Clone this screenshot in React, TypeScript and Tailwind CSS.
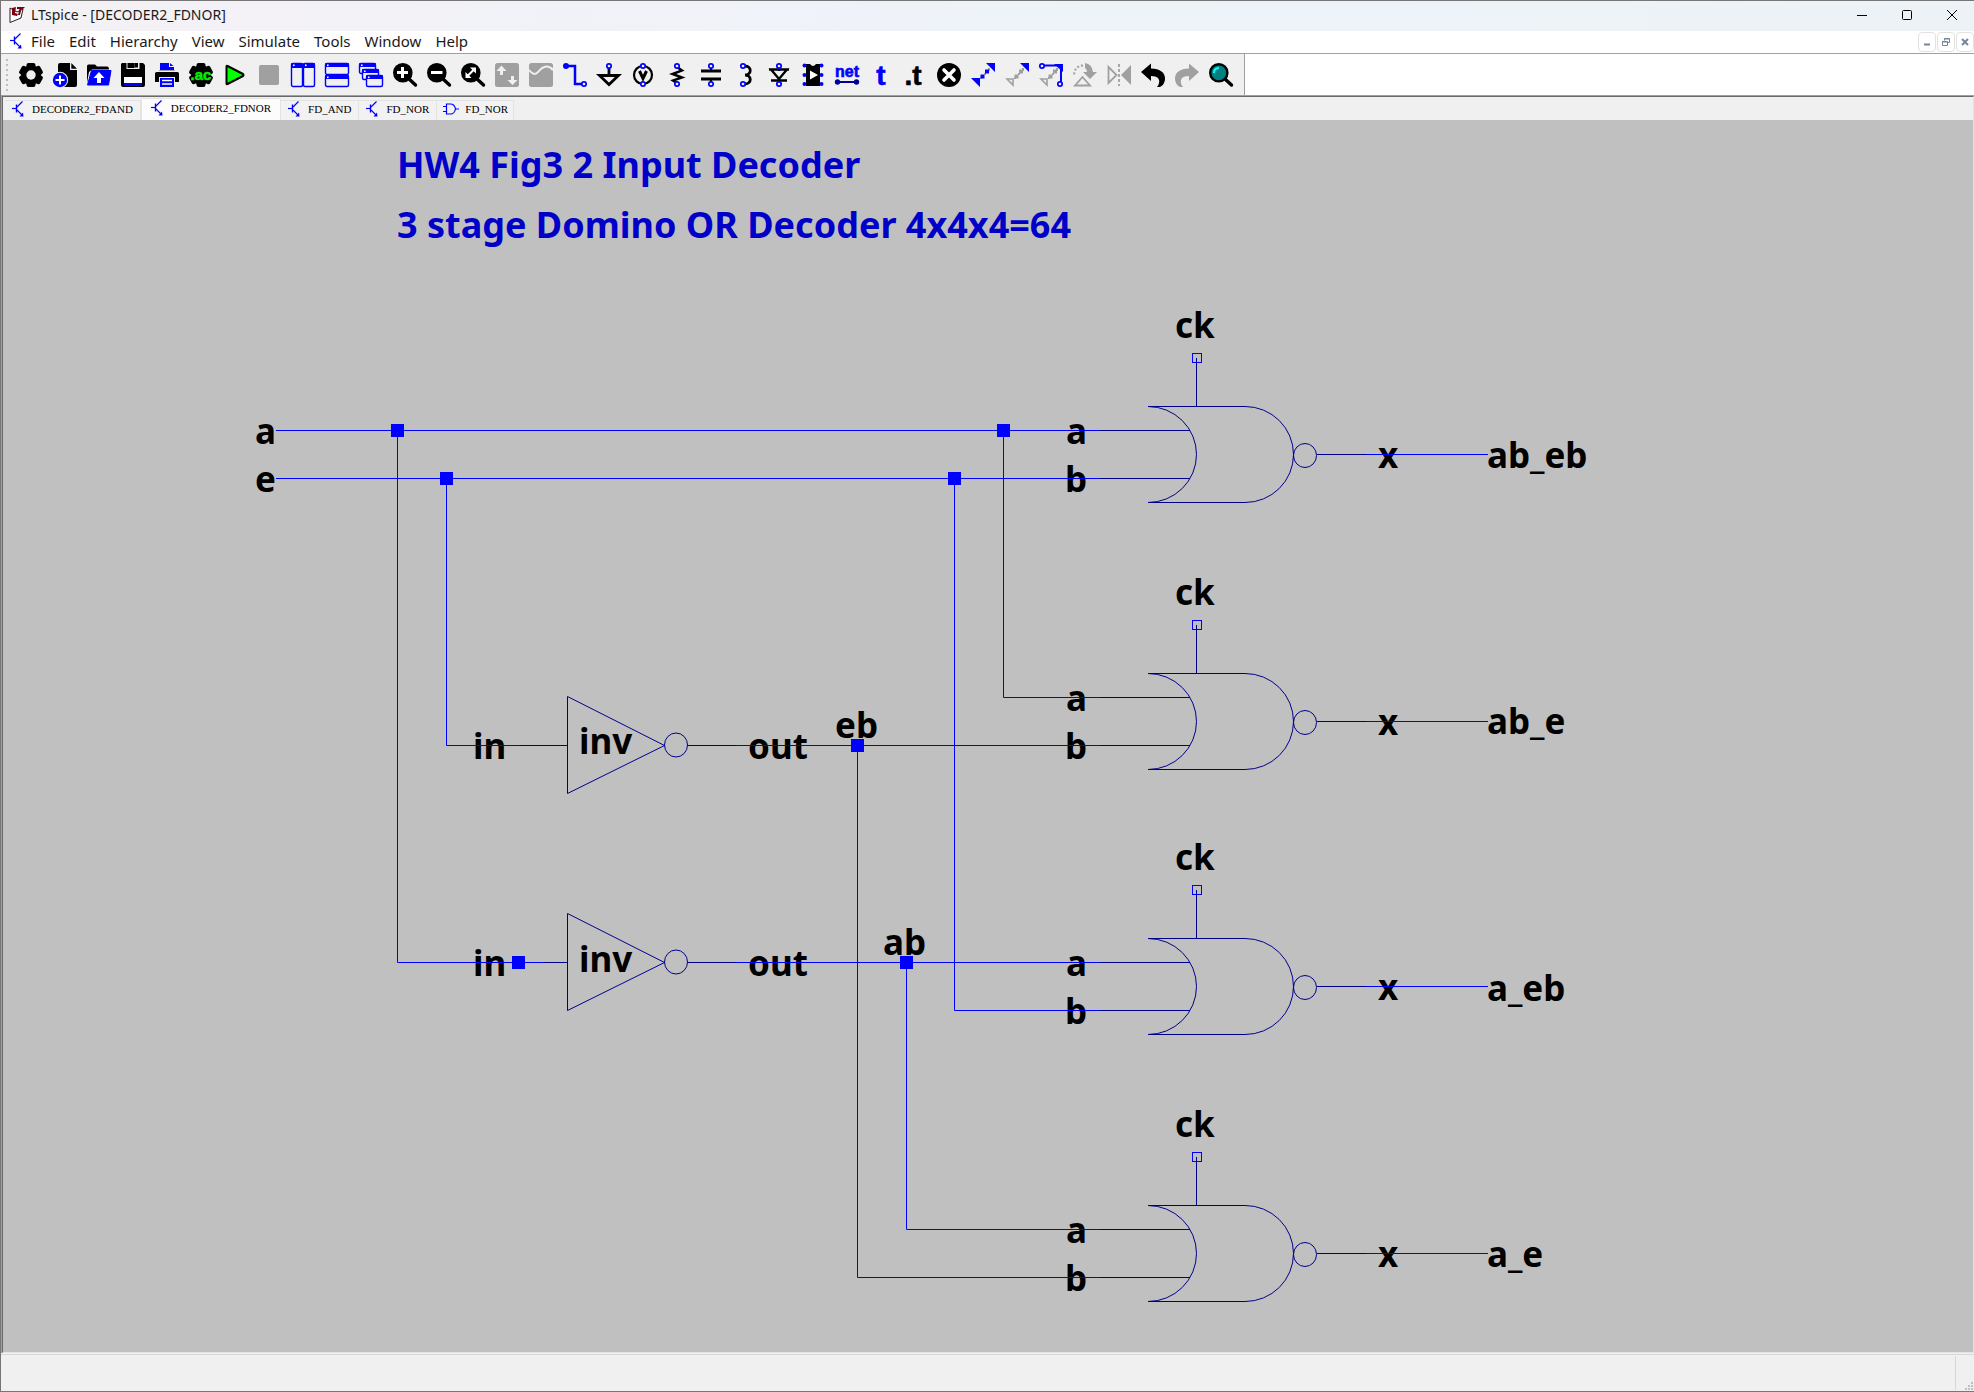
import type { ReactNode } from "react";

const BLUE = "#0000ff";
const NAVY = "#00008b";
const GREY = "#a0a0a0";
const FACE = "#f0f0f0";

/* ---------- toolbar icons, all on a 24 unit grid ---------- */

function GearBody() {
  return (
    <>
      <circle cx="12" cy="12" r="10" />
      <rect x="7.5" y="0" width="9" height="24" rx="2" />
      <rect x="7.5" y="0" width="9" height="24" rx="2" transform="rotate(60 12 12)" />
      <rect x="7.5" y="0" width="9" height="24" rx="2" transform="rotate(120 12 12)" />
    </>
  );
}

function Pin({ x, y }: { x: number; y: number }) {
  return <circle cx={x} cy={y} r="2.2" fill={FACE} stroke={BLUE} strokeWidth="1.7" />;
}

function Lens({ children }: { children: ReactNode }) {
  return (
    <>
      <path d="M15 15l7.5 7" stroke="#000" strokeWidth="3.4" strokeLinecap="round" />
      <circle cx="9.8" cy="9.8" r="9.8" />
      {children}
    </>
  );
}

function Pane({ x, y, w, h, bar }: { x: number; y: number; w: number; h: number; bar: number }) {
  return (
    <>
      <rect x={x + 0.5} y={y + 0.5} width={w - 1} height={h - 1} rx="1.5" fill={FACE} stroke={BLUE} strokeWidth="1.4" />
      <rect x={x} y={y} width={w} height={bar} rx="1" fill={BLUE} />
      <rect x={x + 2} y={y + 1.5} width="1.6" height="1.6" fill="#fff" />
    </>
  );
}

function DragDots({ first, second }: { first: string; second: string }) {
  return (
    <>
      <path d="M9 14h2v2H9zM13 10h2v2h-2zM17 5h2v3h-2z" fill={GREY} />
      <path d="M9.5 11.5h4v4h-4z" fill={first} />
      <path d="M14 6.5h4v4h-4z" fill={second} />
    </>
  );
}

const tools: { name: string; art: ReactNode }[] = [
  { name: "Settings", art: <><GearBody /><circle cx="12" cy="12" r="4.7" fill={FACE} /></> },
  {
    name: "New schematic",
    art: (
      <>
        <path d="M5 2q0-2 2-2h10v7h7v15q0 2-2 2H5z" />
        <path d="M18.3 0L24 5.7h-5.7z" />
        <circle cx="7" cy="17" r="8.2" fill={FACE} />
        <circle cx="7" cy="17" r="7.2" fill={BLUE} />
        <path d="M7 12.5v9M2.5 17h9" stroke="#fff" strokeWidth="2" />
      </>
    ),
  },
  {
    name: "Open",
    art: (
      <>
        <path d="M0 20V3q0-1.500 1.500-1.500H8l2 2h10q2 0 2 3H5L2 9z" />
        <path d="M4.500 7.500H24L21.500 22H0.500z" fill={BLUE} stroke={BLUE} strokeLinejoin="round" />
        <path d="M12 9l5.500 6h-3.500v5h-4v-5H6.500z" fill="#fff" />
      </>
    ),
  },
  {
    name: "Save",
    art: (
      <>
        <path d="M1 0h21l2 2v20q0 2-2 2H2q-2 0-2-2V1z" />
        <path d="M5.500 0v6h13V0h-1.500v4.500H13.500V0z" fill={FACE} />
        <path d="M6.500 0v5h7V0z" />
        <path d="M3 14h18v6H3z" fill="#fff" />
        <path d="M3 20h18v3H3z" fill={BLUE} />
      </>
    ),
  },
  {
    name: "Print",
    art: (
      <>
        <path d="M5 0h9v4h5v3H5z" fill={BLUE} />
        <path d="M15 0l3.500 3H15z" fill={BLUE} />
        <path d="M4 7h16v1H4z" fill={GREY} />
        <path d="M1.500 9h21Q24 9 24 10.500V19h-4v-5H4v5H0v-8.500Q0 9 1.500 9z" />
        <path d="M5 15h14v9H5z" fill={BLUE} />
        <path d="M7 17.500h10M7 21h10" stroke="#fff" strokeWidth="1.500" />
      </>
    ),
  },
  {
    name: "Configure analysis",
    art: (
      <>
        <GearBody />
        <text x="12" y="17" textAnchor="middle" fill="#00f000" className="font-['Liberation_Sans'] text-[15px] font-bold" stroke="#00f000" strokeWidth="0.5">.ac</text>
      </>
    ),
  },
  { name: "Run", art: <path d="M3.500 3.500v17q0 1 1 .5l15.500-8q1-1 0-2L4.500 3q-1-.5-1 .5z" fill="#00ff00" stroke="#000" strokeWidth="2" strokeLinejoin="round" /> },
  { name: "Stop", art: <rect x="2" y="2" width="20" height="20" rx="2" fill={GREY} /> },
  { name: "Tile vertically", art: <><Pane x={0} y={0} w={12} h={24} bar={5} /><Pane x={12} y={0} w={12} h={24} bar={5} /></> },
  { name: "Tile horizontally", art: <><Pane x={0} y={0} w={24} h={12} bar={4} /><Pane x={0} y={12} w={24} h={12} bar={4} /></> },
  { name: "Cascade", art: <><Pane x={0} y={0} w={17} h={11} bar={4} /><Pane x={3} y={6} w={17} h={11} bar={4} /><Pane x={7} y={12} w={17} h={12} bar={4} /></> },
  { name: "Zoom in", art: <Lens><path d="M9.500 4v11M4 9.500h11" stroke="#fff" strokeWidth="3" /></Lens> },
  { name: "Zoom out", art: <Lens><path d="M4 9.500h11.500" stroke="#fff" strokeWidth="3" /></Lens> },
  {
    name: "Zoom to fit",
    art: (
      <Lens>
        <path d="M6.500 13L13 6.500" stroke="#fff" strokeWidth="2.200" />
        <path d="M9 4.500h6v6zM4.500 9v6h6z" fill="#fff" />
      </Lens>
    ),
  },
  {
    name: "Autorange",
    art: (
      <>
        <rect width="24" height="24" rx="2.500" fill={GREY} />
        <path d="M6.500 12V6M17.500 13v6" stroke={FACE} strokeWidth="3" />
        <path d="M1.500 8l5-5.500 5 5.500zM12.500 17l5 5 5-5z" fill={FACE} />
      </>
    ),
  },
  {
    name: "Waveform",
    art: (
      <>
        <rect width="24" height="24" rx="2.500" fill={GREY} />
        <path d="M0 7c4 5 7 5 10 1s9-7 14-1" fill="none" stroke={FACE} strokeWidth="2" />
      </>
    ),
  },
  {
    name: "Wire",
    art: (
      <>
        <path d="M3 3h9v18h7" fill="none" stroke={BLUE} strokeWidth="2.500" />
        <circle cx="3" cy="3" r="3" fill={BLUE} />
        <Pin x={21} y={21} />
      </>
    ),
  },
  {
    name: "Ground",
    art: (
      <>
        <path d="M12 4v8M2.500 12.500h19L12 21.500z" fill="none" stroke="#000" strokeWidth="2.800" />
        <Pin x={12} y={3} />
      </>
    ),
  },
  {
    name: "Voltage source",
    art: (
      <>
        <circle cx="12" cy="12" r="9" fill="none" stroke="#000" strokeWidth="2.200" />
        <path d="M8.500 8l3.500 7.500L15.500 8" fill="none" stroke="#000" strokeWidth="3" />
        <Pin x={12} y={3} /><Pin x={12} y={21} />
      </>
    ),
  },
  {
    name: "Resistor",
    art: (
      <>
        <path d="M12 4l5 3.500L7.500 11l9.500 3.500L8 17.500l4 2.500" fill="none" stroke="#000" strokeWidth="2.400" />
        <Pin x={12} y={3} /><Pin x={12} y={21} />
      </>
    ),
  },
  {
    name: "Capacitor",
    art: (
      <>
        <path d="M12 4v4M12 16v4" stroke="#000" strokeWidth="2" />
        <path d="M2 8h20M2 16h20" stroke="#000" strokeWidth="2.800" />
        <Pin x={12} y={3} /><Pin x={12} y={21} />
      </>
    ),
  },
  {
    name: "Inductor",
    art: (
      <>
        <path d="M12 3c7 0 7 9 0 9c7 0 7 9 0 9" fill="none" stroke="#000" strokeWidth="2.800" />
        <Pin x={10} y={3} /><Pin x={10} y={21} />
      </>
    ),
  },
  {
    name: "Diode",
    art: (
      <>
        <path d="M12 4v4M12 15v5M2 6.500h20M4 17.500h16M4 6.500h16L12 16z" fill="none" stroke="#000" strokeWidth="2.400" />
        <Pin x={12} y={3} /><Pin x={12} y={21} />
      </>
    ),
  },
  {
    name: "Component",
    art: (
      <>
        <path d="M5 1h4q3 4 6 0h4v22H5z" />
        <path d="M9 7.500l8 4.500-8 4.500z" fill="#fff" />
        <g fill={BLUE}>
          <circle cx="3.500" cy="2.500" r="2" /><circle cx="3.500" cy="12" r="2" /><circle cx="3.500" cy="21" r="2" />
          <circle cx="20.500" cy="2.500" r="2" /><circle cx="20.500" cy="12" r="2" /><circle cx="20.500" cy="21" r="2" />
        </g>
      </>
    ),
  },
  {
    name: "Label net",
    art: (
      <>
        <text x="12" y="14" textAnchor="middle" fill={BLUE} stroke={BLUE} strokeWidth="0.6" className="font-['Liberation_Sans'] text-[16px] font-bold">net</text>
        <path d="M2 19h20" stroke="#000099" strokeWidth="2" />
        <circle cx="2.500" cy="19" r="2.700" fill="#000099" /><circle cx="21.500" cy="19" r="2.700" fill="#000099" />
      </>
    ),
  },
  { name: "Text", art: <text x="12" y="22" textAnchor="middle" fill={BLUE} stroke={BLUE} strokeWidth="0.6" className="font-['Liberation_Sans'] text-[28px] font-bold">t</text> },
  { name: "SPICE directive", art: <text x="10" y="22" textAnchor="middle" stroke="#000" strokeWidth="0.6" className="font-['Liberation_Sans'] text-[28px] font-bold">.t</text> },
  {
    name: "Delete",
    art: (
      <>
        <circle cx="12" cy="12" r="12" />
        <path d="M7 7l10 10M17 7L7 17" stroke="#fff" strokeWidth="3.600" strokeLinecap="round" />
      </>
    ),
  },
  { name: "Copy", art: <><DragDots first={BLUE} second={BLUE} /><path d="M15 0h9v9zM0 15h9v9z" fill={BLUE} /></> },
  { name: "Move", art: <><DragDots first={GREY} second={GREY} /><path d="M15 0h9v9z" fill={BLUE} /><path d="M2 16h6v6z" fill="none" stroke={GREY} strokeWidth="1.600" /></> },
  {
    name: "Drag",
    art: (
      <>
        <DragDots first={GREY} second={GREY} />
        <path d="M2 16h6v6z" fill="none" stroke={GREY} strokeWidth="1.600" />
        <path d="M5 2.500h17V19" fill="none" stroke={BLUE} strokeWidth="2" />
        <path d="M15 1h9v8z" fill={BLUE} />
        <Pin x={3} y={3} /><Pin x={21} y={21} />
      </>
    ),
  },
  {
    name: "Rotate",
    art: (
      <>
        <path d="M12 0Q19 1 20 9h4l-7 7-7-7h4q0-3-2-4z" fill={GREY} />
        <path d="M10 2.500Q1 3 1 13" fill="none" stroke={GREY} strokeWidth="2" strokeDasharray="2 2" />
        <path d="M2 22.500h15L9.500 14z" fill={FACE} stroke={GREY} strokeWidth="1.800" />
      </>
    ),
  },
  {
    name: "Mirror",
    art: (
      <>
        <path d="M1.500 4l8 8-8 8z" fill="none" stroke={GREY} strokeWidth="1.800" />
        <path d="M24 2v20L14 12z" fill={GREY} />
        <path d="M12 1v22" stroke={GREY} strokeWidth="1.800" strokeDasharray="3 2" />
      </>
    ),
  },
  { name: "Undo", art: <path d="M0 9l10-8.500v5Q24 6 24 16q0 5-5 8h-3q4-5 1-9-2-2-7-2v5z" /> },
  { name: "Redo", art: <path d="M24 9L14 .5v5Q0 6 0 16q0 5 5 8h3q-4-5-1-9 2-2 7-2v5z" fill={GREY} /> },
  {
    name: "Find",
    art: (
      <>
        <path d="M16 16l6.500 6" stroke="#000" strokeWidth="3.400" strokeLinecap="round" />
        <circle cx="9.800" cy="9.800" r="8.600" fill="#008080" stroke="#000" strokeWidth="2.400" />
        <path d="M5 10q0-5 5-5" fill="none" stroke="#00ffff" strokeWidth="2" />
      </>
    ),
  },
];

/* ---------- small glyphs ---------- */

function SchematicIcon() {
  return (
    <svg viewBox="0 0 12 16" className="h-4 w-3 shrink-0" fill="none" stroke={BLUE}>
      <path d="M0 7.500h5" strokeWidth="1.200" />
      <path d="M4.500 3.500v8" strokeWidth="1.400" />
      <path d="M5 6l5.500-5.500M5 9l5 5" strokeWidth="1.200" />
      <path d="M11.500 15.500H7.500l3.500-4z" fill={BLUE} stroke="none" />
    </svg>
  );
}

function GateIcon() {
  return (
    <svg viewBox="0 0 16 12" className="h-3 w-4 shrink-0" fill="none" stroke={BLUE} strokeWidth="1.200">
      <path d="M3.500 1h4q4 0 5 5-1 5-5 5h-4zM0 3.500h3.500M0 8.500h3.500M12.500 6H16" />
    </svg>
  );
}

function AppLogo() {
  return (
    <svg viewBox="0 0 16 16" className="size-4 shrink-0">
      <path d="M1 15.500V1l7 4 6-3-2 9z" fill="#fff" stroke="#222" />
      <path d="M3 1l4-1-1 6 3 1-1 2-5-1zM8 0h8l-2 2h-1.500l-1.500 6H9l1.500-6H8z" fill="#7a0010" />
    </svg>
  );
}

/* ---------- schematic ---------- */

const heading = "font-['Noto_Sans',sans-serif] text-[36px] font-bold";
const label = "font-['Noto_Sans',sans-serif] text-[35px] font-bold";

function NorGate({ y }: { y: number }) {
  return (
    <g transform={`translate(0 ${y})`} fill="none">
      <g fill="#000" className={label}>
        <text x="1175" y="338">ck</text>
        <text x="1066" y="444">a</text>
        <text x="1065" y="492">b</text>
        <text x="1378" y="468">x</text>
      </g>
      <g stroke={NAVY}>
        <path d="M1148 406.500H1245A48.500 48 0 0 1 1245 502.500H1148M1148 406.500A48.500 48 0 0 1 1148 502.500" />
        <path d="M1196.500 358V406.500M1100 430.500H1190M1100 478.500H1190M1317 454.500H1366" />
        <ellipse cx="1305" cy="455.500" rx="11.500" ry="12" />
      </g>
      <rect x="1192.500" y="353.500" width="9" height="9" stroke={BLUE} />
      <path d="M1366 454.500H1488" stroke={BLUE} />
    </g>
  );
}

function Inverter({ y, from, ty }: { y: number; from: number; ty: number }) {
  return (
    <g transform={`translate(0 ${y})`} fill="none">
      <g fill="#000" className={label}>
        <text x="473" y="14">in</text>
        <text x="579" y={ty}>inv</text>
        <text x="748" y="14">out</text>
      </g>
      <g stroke={NAVY}>
        <path d={`M${from} .5H567M688 .5H736`} />
        <path d="M567.500 -48.500L664.500 .5L567.500 48.500z" />
        <ellipse cx="676" cy="0" rx="11.500" ry="12" />
      </g>
    </g>
  );
}

const wires = [
  "M276 430.500H1100", "M276 478.500H1100",
  "M397.500 430.500V962.500H544", "M446.500 478.500V745.500H519",
  "M736 745.500H1100", "M736 962.500H1100",
  "M1003.500 430.500V697.500H1100", "M954.500 478.500V1010.500H1100",
  "M857.500 745.500V1277.500H1100", "M906.500 962.500V1229.500H1100",
];

const nodes = [[397, 430], [1003, 430], [446, 478], [954, 478], [857, 745], [906, 962], [518, 962]];

const outputs = [
  { y: 468, name: "ab_eb" }, { y: 734, name: "ab_e" }, { y: 1001, name: "a_eb" }, { y: 1267, name: "a_e" },
];

function Schematic() {
  return (
    <svg viewBox="3 120 1970 1232" preserveAspectRatio="xMinYMin meet" className="block w-full" role="img" aria-label="Decoder schematic">
      <g fill="#0000c8" className={heading}>
        <text x="397" y="178">HW4 Fig3 2 Input Decoder</text>
        <text x="397" y="238">3 stage Domino OR Decoder 4x4x4=64</text>
      </g>
      <g className={label}>
        <text x="255" y="444">a</text>
        <text x="255" y="492">e</text>
        <text x="835" y="738">eb</text>
        <text x="883" y="955">ab</text>
        {outputs.map((o) => <text key={o.name} x="1487" y={o.y}>{o.name}</text>)}
      </g>
      {[0, 267, 532, 799].map((y) => <NorGate key={y} y={y} />)}
      <Inverter y={745} from={519} ty={9} />
      <Inverter y={962} from={544} ty={10} />
      <path d={wires.join("")} fill="none" stroke={BLUE} />
      {nodes.map(([x, y]) => <rect key={`${x}-${y}`} x={x - 6} y={y - 6} width="13" height="13" fill={BLUE} />)}
    </svg>
  );
}

/* ---------- window ---------- */

const menus = ["File", "Edit", "Hierarchy", "View", "Simulate", "Tools", "Window", "Help"];

const tabs = [
  { name: "DECODER2_FDAND", gate: false },
  { name: "DECODER2_FDNOR", gate: false, active: true },
  { name: "FD_AND", gate: false },
  { name: "FD_NOR", gate: false },
  { name: "FD_NOR", gate: true },
];

export default function App() {
  return (
    <div className="flex min-h-screen flex-col border-t border-b border-l border-[#767676] bg-[#f0f0f0] font-['Noto_Sans',sans-serif] text-[#1a1a1a]">
      <header className="flex h-[30px] items-center bg-gradient-to-r from-[#f5f1f5] via-[#eef3f9] to-[#edf2f7] pb-[2px] pl-2">
        <AppLogo />
        <h1 className="ml-1.5 flex-1 text-sm leading-5">LTspice - [DECODER2_FDNOR]</h1>
        <button aria-label="Minimize" className="flex h-full w-[45px] items-center justify-center">
          <svg viewBox="0 0 10 10" className="size-2.5" stroke="#000"><path d="M0 5.500h10" /></svg>
        </button>
        <button aria-label="Maximize" className="flex h-full w-[45px] items-center justify-center">
          <svg viewBox="0 0 10 10" className="size-2.5" fill="none" stroke="#000"><rect x=".5" y=".5" width="9" height="9" rx="1" /></svg>
        </button>
        <button aria-label="Close" className="flex h-full w-[45px] items-center justify-center">
          <svg viewBox="0 0 10 10" className="size-2.5" stroke="#000"><path d="M0 0l10 10M10 0L0 10" /></svg>
        </button>
      </header>

      <nav className="flex h-[23px] items-center border-b border-[#a0a0a0] bg-white pl-[9px]">
        <div className="flex flex-1 items-center gap-[2px] pb-[2px]">
          <SchematicIcon />
          <div className="flex">
            {menus.map((m) => (
              <button key={m} className="px-[7px] text-[15px] leading-5">{m}</button>
            ))}
          </div>
        </div>
        <div className="flex gap-px">
          <button aria-label="Minimize document" className="flex h-5 w-[18px] items-center justify-center rounded-sm border border-[#e2e2e2]">
            <svg viewBox="0 0 8 8" className="size-2" fill="#76879a"><path d="M1 5.500h6v2H1z" /></svg>
          </button>
          <button aria-label="Restore document" className="flex h-5 w-[18px] items-center justify-center rounded-sm border border-[#e2e2e2]">
            <svg viewBox="0 0 8 8" className="size-2" fill="none" stroke="#76879a"><path d="M2.500 2.500V.5h5v4H6M2 1h6M.5 3.500h5v4h-5zM0 4h6" /></svg>
          </button>
          <button aria-label="Close document" className="flex h-5 w-[18px] items-center justify-center rounded-sm border border-[#e2e2e2]">
            <svg viewBox="0 0 8 8" className="size-2" stroke="#76879a" strokeWidth="2"><path d="M1 1l6 6M7 1L1 7" /></svg>
          </button>
        </div>
      </nav>

      <div className="flex h-[41px] bg-white">
        <div className="flex items-center border-r border-[#a0a0a0] bg-[#f0f0f0] pr-[6px] pl-[5px]">
          <svg viewBox="0 0 2 32" className="h-8 w-0.5" fill="#bdbdbd">
            {[0, 5, 10, 15, 20, 25, 30].map((y) => <rect key={y} y={y} width="2" height="2" />)}
          </svg>
          <div className="ml-[6px] flex" role="toolbar">
            {tools.map((t) => (
              <button key={t.name} aria-label={t.name} className="flex h-9 w-[34px] items-center justify-center">
                <svg viewBox="0 0 24 24" className="size-6 overflow-visible">{t.art}</svg>
              </button>
            ))}
          </div>
        </div>
      </div>

      <main className="flex flex-1 flex-col border-t border-l border-[#a0a0a0]">
        <div className="flex flex-1 flex-col border-t border-r border-b border-l border-t-[#696969] border-r-[#e3e3e3] border-b-[#e3e3e3] border-l-[#696969]">
          <div role="tablist" className="flex h-[23px] items-end pl-[2px]">
            {tabs.map((t, i) => (
              <button
                key={i}
                role="tab"
                aria-selected={!!t.active}
                className={
                  t.active
                    ? "flex h-[22px] items-center gap-2 border-t border-r border-l border-[#e3e3e3] bg-[#fcfcfc] pr-[9px] pb-[4px] pl-[9px]"
                    : t.gate
                      ? "flex h-5 items-center gap-[6px] border-t border-r border-[#e3e3e3] bg-[#f2f2f2] pr-[5px] pb-[3px] pl-[6px]"
                      : "flex h-5 items-center gap-2 border-t border-r border-[#e3e3e3] bg-[#f2f2f2] pr-[7px] pb-[3px] pl-[7px]"
                }
              >
                {t.gate ? <GateIcon /> : <SchematicIcon />}
                <span className="font-['Liberation_Serif',serif] text-[11px] leading-4 text-black">{t.name}</span>
              </button>
            ))}
          </div>
          <div className="flex-1 bg-[#c0c0c0]">
            <Schematic />
          </div>
        </div>
      </main>

      <footer className="mt-px flex h-[37px] justify-end border-t border-[#d7d7d7] pt-px pb-px">
        <div className="flex w-[19px] items-end justify-end border-l border-[#d7d7d7] pr-px">
          <svg viewBox="0 0 8 8" className="size-2" fill="#bfbfbf">
            <path d="M6 0h2v2H6zM3 3h2v2H3zM6 3h2v2H6zM0 6h2v2H0zM3 6h2v2H3zM6 6h2v2H6z" />
          </svg>
        </div>
      </footer>
    </div>
  );
}
